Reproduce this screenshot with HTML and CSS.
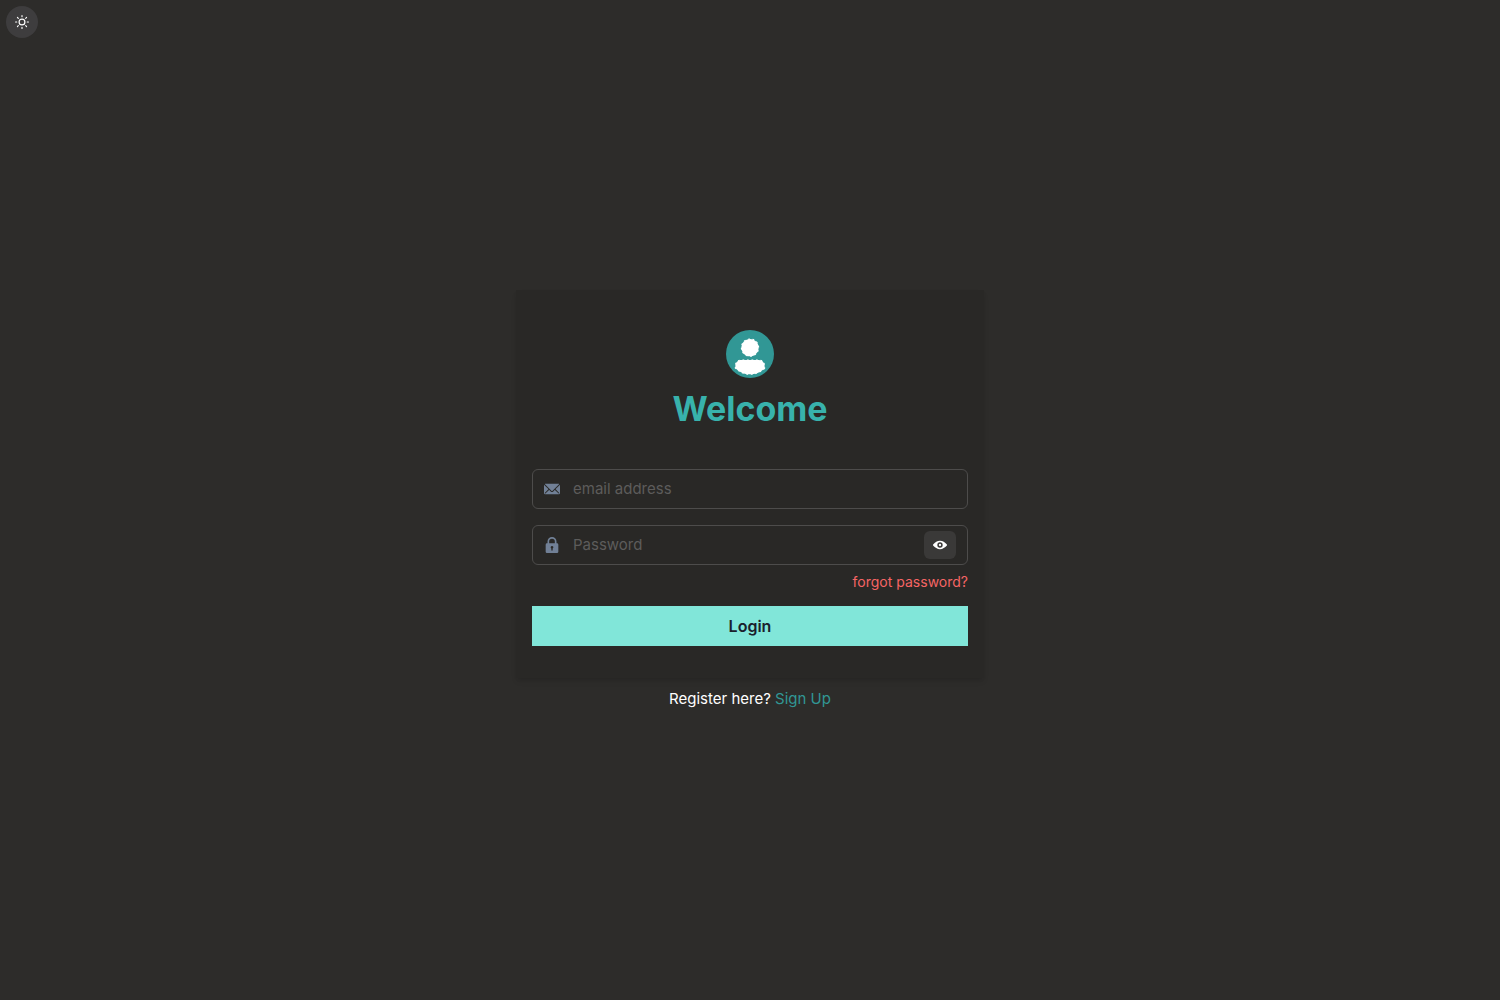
FILE: index.html
```html
<!DOCTYPE html>
<html lang="en">
<head>
<meta charset="utf-8">
<meta name="viewport" content="width=device-width, initial-scale=1">
<title>Login</title>
<link rel="stylesheet" href="styles.css">
</head>
<body>
<header class="topbar">
  <button class="theme-toggle" type="button" aria-label="Switch theme">
    <svg width="14" height="14" viewBox="0 0 24 24" fill="none" stroke="currentColor" stroke-width="2" stroke-linecap="round" stroke-linejoin="round" aria-hidden="true">
      <circle cx="12" cy="12" r="5"/>
      <path d="M12 1v2M12 21v2M4.22 4.22l1.42 1.42M18.36 18.36l1.42 1.42M1 12h2M21 12h2M4.22 19.78l1.42-1.42M18.36 5.64l1.42-1.42"/>
    </svg>
  </button>
</header>
<main class="page">
  <section class="card">
    <div class="avatar">
      <svg width="48" height="48" viewBox="0 0 128 128" fill="#fff" stroke="#fff" stroke-width="3" stroke-dasharray="5 7" aria-hidden="true">
        <path d="M103 102.139C93.094 111.920 79.350 118 64.164 118 48.806 118 34.929 111.768 25 101.789V95.200C25 86.810 31.981 80 40.600 80h46.800c8.619 0 15.600 6.810 15.600 15.200v6.939z"/>
        <path d="M64 24c-12.702 0-23 10.294-23 23 0 12.706 10.298 23 23 23s23-10.294 23-23c0-12.706-10.298-23-23-23z"/>
      </svg>
    </div>
    <h1 class="title">Welcome</h1>
    <form class="form">
      <label class="field">
        <svg class="field-icon" width="16" height="16" viewBox="0 0 24 24" fill="currentColor" aria-hidden="true">
          <path d="M11.114 14.556a1.252 1.252 0 0 0 1.768 0L22.568 4.870a.5.5 0 0 0-.281-.849A1.966 1.966 0 0 0 22 4H2a1.966 1.966 0 0 0-.289.021.5.5 0 0 0-.281.849z"/>
          <path d="M23.888 5.832a.182.182 0 0 0-.200.039l-6.200 6.200a.251.251 0 0 0 0 .354l5.043 5.043a.750.750 0 1 1-1.060 1.061l-5.043-5.043a.250.250 0 0 0-.354 0l-2.129 2.129a2.750 2.750 0 0 1-3.888 0l-2.129-2.129a.250.250 0 0 0-.354 0l-5.043 5.043a.750.750 0 0 1-1.060-1.061l5.043-5.043a.251.251 0 0 0 0-.354l-6.200-6.200a.182.182 0 0 0-.200-.039A.182.182 0 0 0 0 6v12a2 2 0 0 0 2 2h20a2 2 0 0 0 2-2V6a.181.181 0 0 0-.112-.168z"/>
        </svg>
        <input class="input" type="email" placeholder="email address" aria-label="email address">
      </label>
      <div class="field">
        <svg class="field-icon" width="16" height="16" viewBox="0 0 24 24" fill="currentColor" aria-hidden="true">
          <path d="M19.500 9.500h-.750V6.750a6.750 6.750 0 0 0-13.500 0V9.500H4.500a2 2 0 0 0-2 2V22a2 2 0 0 0 2 2h15a2 2 0 0 0 2-2V11.500a2 2 0 0 0-2-2zm-9.500 6a2 2 0 1 1 3 1.723V19.500a1 1 0 0 1-2 0v-2.277a1.994 1.994 0 0 1-1-1.723zM7.750 6.750a4.250 4.250 0 0 1 8.500 0V9a.5.5 0 0 1-.5.5h-7.500a.5.5 0 0 1-.5-.5z"/>
        </svg>
        <input class="input" type="password" placeholder="Password" aria-label="Password">
        <button class="reveal" type="button" aria-label="Show password">
          <svg width="14" height="14" viewBox="0 0 24 24" fill="currentColor" aria-hidden="true">
            <path d="M23.432 10.524C20.787 7.614 16.400 4.538 12 4.600 7.600 4.537 3.213 7.615.568 10.524a2.211 2.211 0 0 0 0 2.948C3.182 16.351 7.507 19.400 11.839 19.400h.308c4.347 0 8.671-3.049 11.288-5.929a2.210 2.210 0 0 0-.003-2.947zM7.400 12a4.600 4.600 0 1 1 9.200 0 4.600 4.600 0 0 1-9.200 0z"/>
            <circle cx="12" cy="12" r="2"/>
          </svg>
        </button>
      </div>
      <a class="forgot" href="#">forgot password?</a>
      <button class="submit" type="submit">Login</button>
    </form>
  </section>
  <p class="register">Register here? <a class="signup" href="#">Sign Up</a></p>
</main>
</body>
</html>
```
FILE: styles.css
```css
* { box-sizing: border-box; }

body {
  display: flex;
  flex-direction: column;
  min-height: 100vh;
  margin: 0;
  background: #2d2c2a;
  color: #fff;
  font-family: Inter, sans-serif;
  font-size: 15px;
  line-height: 26px;
}

button, input { font: inherit; }
button { display: flex; align-items: center; justify-content: center; padding: 0; border: 0; cursor: pointer; }
a { text-decoration: none; }

.topbar { height: 44px; padding: 6px; }

.theme-toggle {
  width: 32px;
  height: 32px;
  border-radius: 50%;
  background: #3e3d3e;
  color: #fff;
}

.page {
  display: flex;
  flex: 1;
  flex-direction: column;
  align-items: center;
  justify-content: center;
  gap: 8px;
  padding: 0 16px 42px;
}

.card {
  display: flex;
  flex-direction: column;
  align-items: center;
  width: 100%;
  max-width: 468px;
  padding: 40px 16px 32px;
  background: #292826;
  box-shadow: 0 4px 6px -1px rgba(0, 0, 0, 0.1), 0 2px 4px -1px rgba(0, 0, 0, 0.06);
}

.avatar {
  width: 48px;
  height: 48px;
  border-radius: 50%;
  background: #319795;
}

.title {
  margin: 8px 0 37px;
  color: #38b2ac;
  font-size: 34px;
  font-weight: 700;
  line-height: 46px;
}

.form { display: flex; flex-direction: column; width: 100%; }

.field {
  display: flex;
  align-items: center;
  gap: 13px;
  height: 40px;
  margin-bottom: 16px;
  padding: 0 11px;
  border: 1px solid #4d4c4b;
  border-radius: 6px;
}
.field:focus-within { border-color: #81e6d9; }
div.field { margin-bottom: 6px; }

.field-icon { flex: none; color: #718096; }

.input {
  flex: 1;
  min-width: 0;
  padding: 0;
  border: 0;
  outline: 0;
  background: transparent;
  color: #fff;
}
.input::placeholder { color: #5d5c5b; opacity: 1; }

.reveal {
  width: 32px;
  height: 28px;
  border-radius: 6px;
  background: #3a3938;
  color: #fff;
}

.forgot {
  align-self: flex-end;
  margin-bottom: 14px;
  color: #f56565;
  font-size: 14px;
  line-height: 21px;
}

.submit {
  height: 40px;
  background: #81e6d9;
  color: #1a202c;
  font-size: 16px;
  font-weight: 600;
}

.register { margin: 0; }
.signup { color: #319795; }
```
